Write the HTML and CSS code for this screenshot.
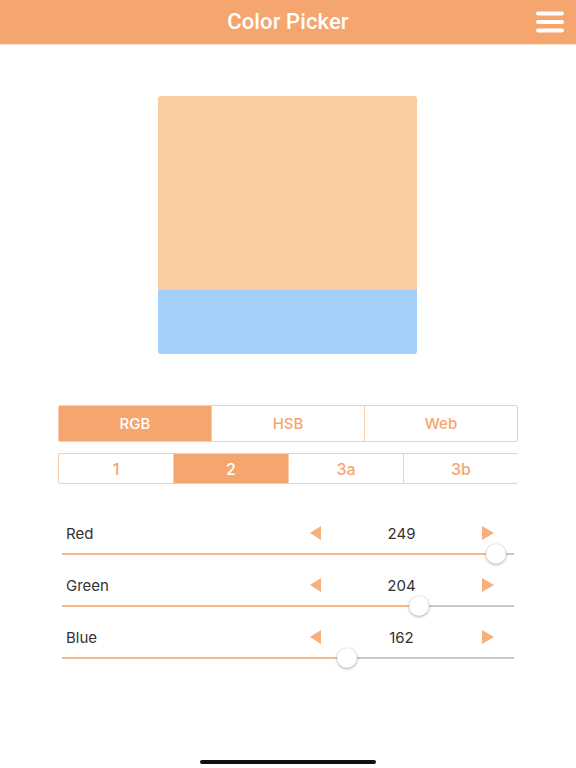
FILE: index.html
```html
<!DOCTYPE html>
<html>
<head>
<meta charset="utf-8">
<link rel="stylesheet" href="styles.css">
</head>
<body>
<div class="app">
  <header class="topbar">
    <div class="title">Color Picker</div>
    <div class="menu" aria-label="menu">
      <svg width="28" height="22" viewBox="0 0 28 22"><g stroke="#fff" stroke-width="4" stroke-linecap="round"><line x1="2" y1="2.5" x2="26" y2="2.5"/><line x1="2" y1="11" x2="26" y2="11"/><line x1="2" y1="19.5" x2="26" y2="19.5"/></g></svg>
    </div>
  </header>
  <main class="content">
    <div class="swatch">
      <div class="swatch-main"></div>
      <div class="swatch-alt"></div>
    </div>
    <div class="seg seg-modes">
      <div class="seg-item active">RGB</div>
      <div class="seg-item">HSB</div>
      <div class="seg-item">Web</div>
    </div>
    <div class="seg seg-sub">
      <div class="seg-item">1</div>
      <div class="seg-item active">2</div>
      <div class="seg-item">3a</div>
      <div class="seg-item">3b</div>
    </div>
    <div class="sliders">
      <div class="row">
        <div class="row-top">
          <span class="label">Red</span>
          <span class="arrow left"></span>
          <span class="value">249</span>
          <span class="arrow right"></span>
        </div>
        <div class="track"><div class="fill" style="width:434px"></div><div class="thumb" style="left:434px"></div></div>
      </div>
      <div class="row">
        <div class="row-top">
          <span class="label">Green</span>
          <span class="arrow left"></span>
          <span class="value">204</span>
          <span class="arrow right"></span>
        </div>
        <div class="track"><div class="fill" style="width:357px"></div><div class="thumb" style="left:357px"></div></div>
      </div>
      <div class="row">
        <div class="row-top">
          <span class="label">Blue</span>
          <span class="arrow left"></span>
          <span class="value">162</span>
          <span class="arrow right"></span>
        </div>
        <div class="track"><div class="fill" style="width:285px"></div><div class="thumb" style="left:285px"></div></div>
      </div>
    </div>
  </main>
  <div class="home-indicator"></div>
</div>
</body>
</html>
```
FILE: styles.css
```css
* { box-sizing: border-box; }
html, body { margin: 0; padding: 0; background: #fff; }
body { font-family: Inter, "Noto Sans", sans-serif; }
.app {
  width: 576px;
  height: 768px;
  display: flex;
  flex-direction: column;
  overflow: hidden;
}
.topbar {
  height: 45px;
  background: #F5A66E;
  border-bottom: 1px solid #FBE0CB;
  display: grid;
  grid-template-columns: 1fr auto 1fr;
  align-items: center;
}
.title {
  grid-column: 2;
  color: #fff;
  font-family: Roboto, Inter, sans-serif;
  font-size: 22px;
  font-weight: 500;
  letter-spacing: 0.1px;
  line-height: 44px;
}
.menu {
  grid-column: 3;
  justify-self: end;
  margin-right: 12px;
  display: flex;
  margin-top: -1px;
}
.content {
  display: flex;
  flex-direction: column;
  padding-left: 58px;
}
.swatch {
  margin-top: 51px;
  margin-left: 100px;
  width: 259px;
  height: 258px;
  border-radius: 3px;
  overflow: hidden;
  display: flex;
  flex-direction: column;
}
.swatch-main { height: 194px; background: #F9CCA2; }
.swatch-alt { flex: 1; background: #A3D0F8; }

.seg {
  display: flex;
  border: 1px solid #F9CDAA;
  border-radius: 2px;
}
.seg-item {
  flex: 1;
  display: flex;
  align-items: center;
  justify-content: center;
  color: #F5A66E;
  font-size: 15px;
  font-weight: 500;
  border-left: 1px solid #F9CDAA;
}
.seg-item:first-child { border-left: none; }
.seg-item.active { background: #F5A66E; color: #fff; }
.seg-modes {
  margin-top: 51px;
  width: 460px;
  height: 37px;
}
.seg-sub {
  margin-top: 11px;
  width: 460px;
  height: 31px;
  border-right: none;
}
.seg-sub .seg-item { font-size: 16px; }

.sliders {
  margin-top: 37px;
  margin-left: 4px;
  width: 452px;
  display: flex;
  flex-direction: column;
}
.row { height: 52px; }
.row-top {
  height: 24px;
  display: grid;
  grid-template-columns: 248px 11px 161px 12px 1fr;
  align-items: center;
  color: #333;
  font-size: 15px;
}
.label { padding-left: 4px; }
.value { text-align: center; }
.arrow {
  width: 0;
  height: 0;
  border-top: 7px solid transparent;
  border-bottom: 7px solid transparent;
}
.arrow.left { border-right: 11px solid #F7AF7C; }
.arrow.right { border-left: 12px solid #F7AF7C; }
.track {
  position: relative;
  margin-top: 8px;
  height: 2px;
  background: #C9C9C9;
}
.fill {
  height: 2px;
  background: #F9B88A;
}
.thumb {
  position: absolute;
  top: -9px;
  width: 20px;
  height: 20px;
  margin-left: -10px;
  border-radius: 50%;
  background: #fff;
  box-shadow: 0 1px 3px rgba(0,0,0,0.3), 0 0 0 0.5px rgba(0,0,0,0.08);
}
.home-indicator {
  margin-top: auto;
  margin-bottom: 4px;
  align-self: center;
  width: 176px;
  height: 4px;
  border-radius: 2px;
  background: #111;
}
```
